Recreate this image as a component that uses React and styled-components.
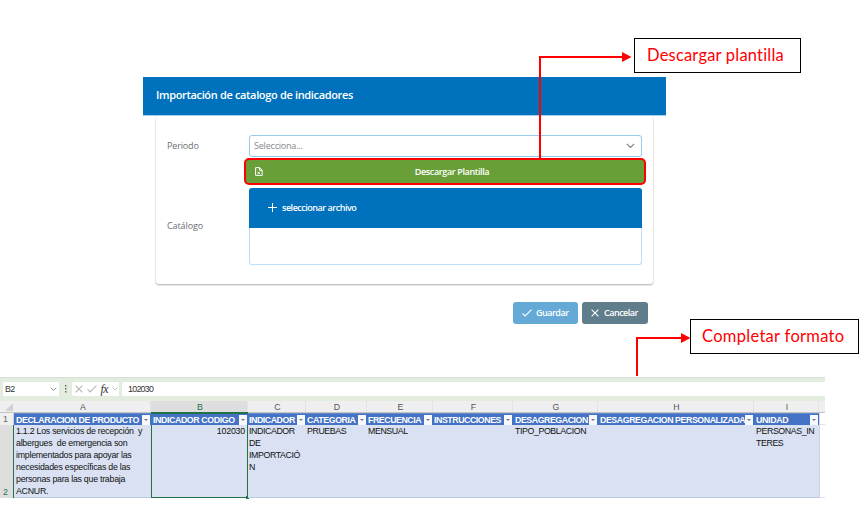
import React from "react";
import styled, { createGlobalStyle, css } from "styled-components";

const GlobalStyle = createGlobalStyle`
  *, *::before, *::after { box-sizing: border-box; }
  body { margin: 0; background: #fff; }
`;

const Page = styled.main`
  position: relative;
  width: 862px;
  height: 520px;
  padding-top: 77px;
  overflow: hidden;
  background: #fff;
  font-family: "Open Sans", "Noto Sans", sans-serif;
`;

/* ---------- import dialog ---------- */

const Dialog = styled.section`
  width: 523px;
  height: 300px;
  margin-left: 143px;
  font-size: 9px;
  color: #696e73;
`;

const DialogHeader = styled.header`
  display: flex;
  align-items: center;
  height: 39px;
  padding: 0 13px 4px;
  background: #0071bc;
  border-bottom: 1px solid #a5d2f0;
  color: #fff;
`;

const DialogTitle = styled.h1`
  margin: 0;
  font-size: 11px;
  font-weight: 600;
  letter-spacing: ${(p) => p.$spacing}px;
  white-space: nowrap;
`;

const FormCard = styled.div`
  display: grid;
  grid-template-columns: 82px 393px;
  grid-template-rows: 22px 29px 77px;
  row-gap: 1px;
  width: 497px;
  height: 168px;
  margin-left: 13px;
  padding: 19px 0 0 11px;
  border-radius: 3px;
  box-shadow: 0 1px 2px rgba(0, 0, 0, 0.34);
  clip-path: inset(0 -4px -4px -4px);
`;

const Label = styled.label`
  grid-column: 1;
  align-self: center;
  padding-bottom: 1px;
  letter-spacing: ${(p) => p.$spacing || 0}px;
`;

const Select = styled.div`
  grid-column: 2;
  display: flex;
  align-items: center;
  justify-content: space-between;
  padding: 0 6px 1px 4px;
  border: 1px solid #94caee;
  border-radius: 3px;
  color: #84898e;
  letter-spacing: -0.2px;
`;

const DownloadButton = styled.button`
  grid-column: 2;
  display: flex;
  align-items: center;
  width: 402px;
  height: 27px;
  margin: 0 0 0 -5px;
  padding: 0 0 0 9px;
  border: 2px solid #f00;
  border-radius: 5px;
  background: #689f38;
  color: #fff;
  font: 600 9px "Open Sans", sans-serif;
  letter-spacing: -0.37px;
`;

const DownloadText = styled.span`
  flex: 1;
  padding-right: 3px;
  text-align: center;
`;

const UploadLabel = styled(Label)`
  grid-row: 3;
  padding-bottom: 2px;
`;

const Uploader = styled.div`
  grid-column: 2;
  display: flex;
  flex-direction: column;
  border: 1px solid #bce0f7;
  border-top: 0;
  border-radius: 3px;
`;

const UploadBar = styled.div`
  display: flex;
  align-items: center;
  gap: 5px;
  height: 40px;
  margin: 0 -1px;
  padding: 0 0 1px 19px;
  border-radius: 3px 3px 0 0;
  background: #0071bc;
  color: #fff;
  font-weight: 600;
  letter-spacing: -0.48px;
`;

const Actions = styled.footer`
  display: flex;
  justify-content: flex-end;
  gap: 4px;
  margin-top: 18px;
  padding-right: 18px;
`;

const ActionButton = styled.button`
  display: flex;
  align-items: center;
  justify-content: flex-start;
  gap: ${(p) => p.$gap}px;
  width: ${(p) => p.$width}px;
  height: 22px;
  padding: 0 0 1px 9px;
  border: 0;
  border-radius: 3px;
  background: ${(p) => p.$bg};
  color: #fff;
  font: 600 9px "Open Sans", sans-serif;
  letter-spacing: -0.5px;
`;

/* ---------- spreadsheet ---------- */

const Sheet = styled.section`
  width: 825px;
  height: 121px;
  font-family: "Liberation Sans", Arial, sans-serif;
  font-size: 8.8px;
  color: #111;
`;

const FormulaBar = styled.div`
  display: flex;
  gap: 3px;
  height: 24px;
  padding: 5px 0 5px 3px;
  background: #e2ecdf;
  box-shadow: inset 0 1px 0 #d5dfd4;
`;

const FormulaField = styled.div`
  display: flex;
  align-items: center;
  justify-content: space-between;
  flex: ${(p) => (p.$width ? `0 0 ${p.$width}px` : "1")};
  padding: ${(p) => p.$pad || "0 2px"};
  border-radius: 2px 0 0 2px;
  background: #fff;
  color: #333;
  font-size: 8.8px;
  letter-spacing: -0.7px;
`;

const Fx = styled.i`
  font: italic 400 12px "Liberation Serif", serif;
  letter-spacing: -0.4px;
  color: #333;
`;

const rowGrid = css`
  display: grid;
  grid-template-columns: 14px 137px 97px 58px 61px 66px 80px 85px 156px 65px 6px;
`;

const LetterRow = styled.div`
  ${rowGrid}
  height: 12px;
  background: #efefef;
  border-bottom: 1px solid #c3c3c3;
`;

const Letter = styled.div`
  display: flex;
  align-items: center;
  justify-content: center;
  padding: 1px 0 0 2px;
  border-right: 1px solid #e3e3e3;
  background: ${(p) => (p.$active ? "#dedede" : "transparent")};
  color: ${(p) => (p.$active ? "#217346" : "#555")};
  box-shadow: ${(p) => (p.$active ? "0 1px 0 #217346" : "none")};
`;

const Corner = styled.div`
  display: flex;
  align-items: flex-end;
  justify-content: flex-end;
  padding: 0 1px 1px 0;
`;

const HeadRow = styled.div`
  ${rowGrid}
  height: 12px;
`;

const RowNumber = styled.div`
  display: flex;
  align-items: flex-end;
  justify-content: center;
  padding-right: 2px;
  border-right: 1px solid ${(p) => (p.$active ? "#217346" : "#d0d0d0")};
  background: ${(p) => (p.$active ? "#dedede" : "#efefef")};
  color: ${(p) => (p.$active ? "#217346" : "#666")};
  line-height: 11px;
`;

const HeadCell = styled.div`
  display: flex;
  align-items: center;
  justify-content: space-between;
  min-width: 0;
  padding: 0 1px 0 ${(p) => p.$indent ?? 2}px;
  border-top: 1px solid ${(p) => (p.$active ? "#217346" : "#6489cd")};
  background: #4472c4;
  color: #fff;
  font-size: 8.8px;
  line-height: 10px;
  font-weight: 700;
  letter-spacing: ${(p) => p.$spacing}px;
  white-space: nowrap;
`;

const HeadText = styled.span`
  flex: 1;
  min-width: 0;
`;

const FilterButton = styled.span`
  display: flex;
  flex: none;
  align-items: center;
  justify-content: center;
  width: 8px;
  height: 10px;
  background: #f7f8fa;

  &::after {
    content: "";
    border: 2px solid transparent;
    border-top-color: #777;
    border-bottom: 0;
  }
`;

const DataRow = styled.div`
  ${rowGrid}
  height: 73px;
  line-height: 12px;
`;

const DataCell = styled.div`
  position: relative;
  padding: 0 0 0 ${(p) => p.$indent ?? 2}px;
  background: #d9e1f2;
  border-bottom: 1px solid #b9c9e6;
  white-space: pre;
  letter-spacing: ${(p) => p.$spacing ?? -0.4}px;
  ${(p) =>
    p.$active &&
    css`
      padding-right: 2px;
      text-align: right;
      border: 1px solid #217346;
      border-top: 0;

      &::after {
        content: "";
        position: absolute;
        right: -2px;
        bottom: -2px;
        width: 3px;
        height: 3px;
        background: #217346;
      }
    `}
`;

const BlankCell = styled.div`
  border-left: 1px solid #c9d5ec;
  border-bottom: 1px solid #e3e3e3;
`;

/* ---------- callouts over the page ---------- */

const Callout = styled.div`
  position: absolute;
  left: ${(p) => p.$x}px;
  top: ${(p) => p.$y}px;
  display: flex;
  align-items: center;
  width: ${(p) => p.$width}px;
  height: 35px;
  padding: 0 0 1px ${(p) => p.$indent}px;
  border: 1px solid #000;
  background: #fff;
  color: #f00;
  font: 400 16.5px Lato, "Open Sans", sans-serif;
  letter-spacing: ${(p) => p.$spacing}px;
  white-space: nowrap;
`;

const Arrows = styled.svg`
  position: absolute;
  inset: 0;
  pointer-events: none;
`;

const Chevron = ({ size = 9, color = "#7d858c" }) => (
  <svg width={size} height={size * 0.6} viewBox="0 0 10 6" fill="none" stroke={color} strokeWidth="1.3">
    <path d="M1 1l4 4 4-4" />
  </svg>
);

const FileIcon = () => (
  <svg width="8" height="9" viewBox="0 0 8 9" fill="none" stroke="#fff" strokeWidth="1">
    <path d="M0.6 0.6h4l2.600 2.500v5.300H0.600z M4.400 0.800v2.500h2.700 M2.600 4.700l2.200 2.400 M4.800 4.700l-2.200 2.400" />
  </svg>
);

const PlusIcon = () => (
  <svg width="9" height="9" viewBox="0 0 9 9" stroke="#fff" strokeWidth="1">
    <path d="M4.5 0v9M0 4.5h9" />
  </svg>
);

const CheckIcon = ({ color = "#fff", width = 10 }) => (
  <svg width={width} height="8" viewBox="0 0 10 8" fill="none" stroke={color} strokeWidth="1.1">
    <path d="M0.5 4.3l2.6 2.7 6.4-6.3" />
  </svg>
);

const CrossIcon = ({ color = "#fff" }) => (
  <svg width="8" height="8" viewBox="0 0 8 8" stroke={color} strokeWidth="1.1">
    <path d="M0.6 0.6l6.8 6.8M7.4 0.6L0.6 7.4" />
  </svg>
);

const DotsIcon = () => (
  <svg width="3" height="8" viewBox="0 0 3 8" fill="#666">
    <path d="M1 0h1.4v1.5H1zM1 3h1.4v1.5H1zM1 6h1.4v1.5H1z" />
  </svg>
);

const Dots = styled.span`
  display: flex;
  align-items: center;
  width: 7px;
  padding-left: 2px;
`;

const columns = [
  { letter: "A", title: "DECLARACION DE PRODUCTO", spacing: -0.41 },
  { letter: "B", title: "INDICADOR CODIGO", spacing: -0.4 },
  { letter: "C", title: "INDICADOR", spacing: -0.45, indent: 1 },
  { letter: "D", title: "CATEGORIA", spacing: -0.4, indent: 1 },
  { letter: "E", title: "FRECUENCIA", spacing: -0.45, indent: 1 },
  { letter: "F", title: "INSTRUCCIONES", spacing: -0.45, indent: 1 },
  { letter: "G", title: "DESAGREGACION", spacing: -0.45 },
  { letter: "H", title: "DESAGREGACION PERSONALIZADA", spacing: -0.43 },
  { letter: "I", title: "UNIDAD", spacing: -0.3 },
];

const activeLetter = "B";

const record = [
  {
    text: "1.1.2 Los servicios de recepción \u00a0y\nalbergues \u00a0de emergencia son\nimplementados para apoyar las\nnecesidades específicas de las\npersonas para las que trabaja\nACNUR.",
    spacing: -0.25,
  },
  { text: "102030", spacing: -0.2 },
  { text: "INDICADOR\nDE\nIMPORTACIÓ\nN" },
  { text: "PRUEBAS" },
  { text: "MENSUAL" },
  { text: "" },
  { text: "TIPO_POBLACION" },
  { text: "" },
  { text: "PERSONAS_IN\nTERES" },
];

export default function App() {
  return (
    <Page>
      <GlobalStyle />
      <Dialog>
        <DialogHeader>
          <DialogTitle $spacing={-0.34}>Importación de catalogo de indicadores</DialogTitle>
        </DialogHeader>
        <FormCard>
          <Label $spacing={-0.15}>Periodo</Label>
          <Select>
            Selecciona...
            <Chevron />
          </Select>
          <DownloadButton>
            <FileIcon />
            <DownloadText>Descargar Plantilla</DownloadText>
          </DownloadButton>
          <UploadLabel $spacing={-0.1}>Catálogo</UploadLabel>
          <Uploader>
            <UploadBar>
              <PlusIcon />
              seleccionar archivo
            </UploadBar>
          </Uploader>
        </FormCard>
        <Actions>
          <ActionButton $bg="#65a9d7" $width={65} $gap={4}>
            <CheckIcon />
            Guardar
          </ActionButton>
          <ActionButton $bg="#607d8b" $width={66} $gap={5}>
            <CrossIcon />
            Cancelar
          </ActionButton>
        </Actions>
      </Dialog>

      <Sheet>
        <FormulaBar>
          <FormulaField $width={56}>
            B2
            <Chevron size={7} />
          </FormulaField>
          <Dots>
            <DotsIcon />
          </Dots>
          <FormulaField $width={47} $pad="0 1px 0 3px">
            <CrossIcon color="#b5b5b5" />
            <CheckIcon color="#b5b5b5" />
            <Fx>fx</Fx>
            <Chevron size={6} color="#aaa" />
          </FormulaField>
          <FormulaField $pad="0 6px">102030</FormulaField>
        </FormulaBar>
        <LetterRow>
          <Corner>
            <svg width="8" height="8" viewBox="0 0 8 8" fill="#d2d2d2">
              <path d="M8 0v8H0z" />
            </svg>
          </Corner>
          {columns.map((c) => (
            <Letter key={c.letter} $active={c.letter === activeLetter}>
              {c.letter}
            </Letter>
          ))}
        </LetterRow>
        <HeadRow>
          <RowNumber>1</RowNumber>
          {columns.map((c) => (
            <HeadCell
              key={c.letter}
              $spacing={c.spacing}
              $indent={c.indent}
              $active={c.letter === activeLetter}
            >
              <HeadText>{c.title}</HeadText>
              <FilterButton />
            </HeadCell>
          ))}
          <BlankCell />
        </HeadRow>
        <DataRow>
          <RowNumber $active>2</RowNumber>
          {record.map((cell, i) => (
            <DataCell
              key={columns[i].letter}
              $active={columns[i].letter === activeLetter}
              $indent={columns[i].indent}
              $spacing={cell.spacing}
            >
              {cell.text}
            </DataCell>
          ))}
          <BlankCell />
        </DataRow>
      </Sheet>

      <Arrows width="862" height="520" viewBox="0 0 862 520">
        <path d="M540 159V57H623M637 376V338H682" fill="none" stroke="#f00" strokeWidth="2" />
        <path d="M622 52l9.500 5-9.500 5zM681 333l9.500 5-9.500 5z" fill="#f00" />
      </Arrows>
      <Callout $x={634} $y={38} $width={167} $spacing={0.2} $indent={12}>
        Descargar plantilla
      </Callout>
      <Callout $x={690} $y={319} $width={169} $spacing={0.3} $indent={11}>
        Completar formato
      </Callout>
    </Page>
  );
}
